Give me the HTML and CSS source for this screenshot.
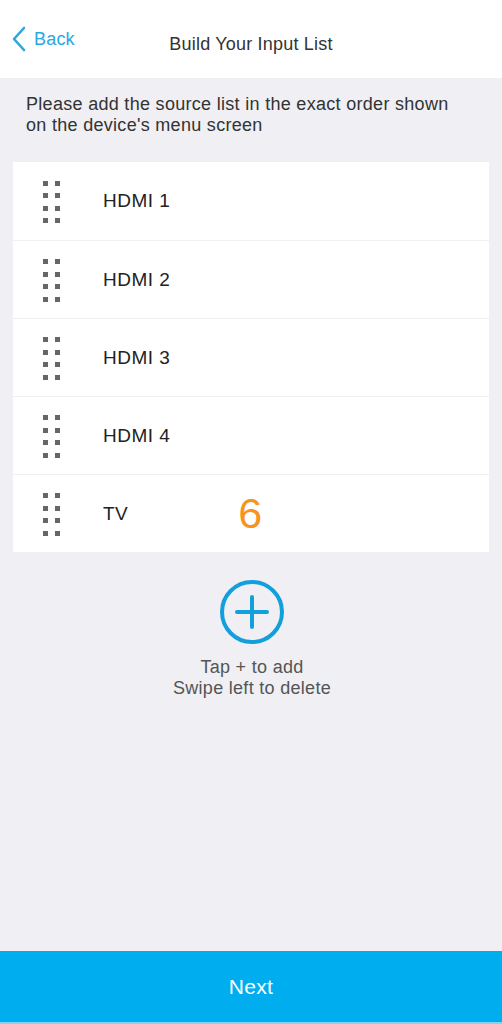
FILE: index.html
```html
<!DOCTYPE html>
<html lang="en">
<head>
    <meta charset="UTF-8">
    <meta name="viewport" content="width=device-width, initial-scale=1.0">
    <title>Build Your Input List</title>
    <link rel="stylesheet" href="styles.css">
</head>
<body>

    <div class="app">
        <header class="topbar">
            <a class="back" href="#">
                <svg class="chevron" width="14" height="26" viewBox="0 0 14 26">
                    <path d="M12 2 L2 13 L12 24" fill="none" stroke="#29a8e0" stroke-width="2.6" stroke-linecap="round" stroke-linejoin="round"/>
                </svg>
                Back
            </a>
            <h1 class="title">Build Your Input List</h1>
        </header>

        <p class="intro">Please add the source list in the exact order shown on the device's menu screen</p>

        <ul class="source-list">
            <li class="source"><span class="grip"><i></i><i></i><i></i><i></i><i></i><i></i><i></i><i></i></span><span class="name">HDMI 1</span></li>
            <li class="source"><span class="grip"><i></i><i></i><i></i><i></i><i></i><i></i><i></i><i></i></span><span class="name">HDMI 2</span></li>
            <li class="source"><span class="grip"><i></i><i></i><i></i><i></i><i></i><i></i><i></i><i></i></span><span class="name">HDMI 3</span></li>
            <li class="source"><span class="grip"><i></i><i></i><i></i><i></i><i></i><i></i><i></i><i></i></span><span class="name">HDMI 4</span></li>
            <li class="source"><span class="grip"><i></i><i></i><i></i><i></i><i></i><i></i><i></i><i></i></span><span class="name">TV</span><span class="channel">6</span></li>
        </ul>

        <div class="add-area">
            <button class="add-btn" type="button">
                <svg width="66" height="66" viewBox="0 0 66 66">
                    <circle cx="33" cy="33" r="30" fill="none" stroke="#139fdb" stroke-width="4"/>
                    <path d="M33 18 V48 M18 33 H48" stroke="#139fdb" stroke-width="4" stroke-linecap="round"/>
                </svg>
            </button>
            <p class="hint">Tap + to add<br>Swipe left to delete</p>
        </div>

        <button class="next" type="button">Next</button>
    </div>

</body>
</html>
```

FILE: styles.css
```css
body {
    font-family: "Liberation Sans", Arial, sans-serif;
    margin: 0;
    background-color: #efeff4;
}

.app {
    display: flex;
    flex-direction: column;
    height: 1024px;
}

.topbar {
    height: 78px;
    background-color: #fff;
    display: flex;
    align-items: center;
    position: relative;
}

.back {
    display: flex;
    align-items: center;
    gap: 8px;
    margin-left: 12px;
    margin-top: 0;
    color: #29a8e0;
    font-size: 18px;
    letter-spacing: 0.2px;
    text-decoration: none;
    position: relative;
    z-index: 1;
}

.title {
    position: absolute;
    left: 0;
    right: 0;
    top: 34px;
    margin: 0;
    text-align: center;
    font-size: 18px;
    letter-spacing: 0.2px;
    font-weight: normal;
    color: #333;
}

.intro {
    margin: 16px 44px 0 26px;
    font-size: 18px;
    letter-spacing: 0.3px;
    line-height: 21px;
    color: #333;
}

.source-list {
    list-style: none;
    margin: 26px 13px 0 13px;
    padding: 0;
    background-color: #fff;
}

.source {
    height: 78px;
    display: flex;
    align-items: center;
    border-top: 1px solid #efeff0;
    box-sizing: border-box;
}

.source:first-child {
    border-top: none;
}

.grip {
    display: grid;
    grid-template-columns: 5px 5px;
    column-gap: 7px;
    row-gap: 7.5px;
    margin-left: 30px;
    margin-top: 2px;
}

.grip i {
    width: 5px;
    height: 5px;
    background-color: #666;
}

.name {
    margin-left: 43px;
    font-size: 19px;
    letter-spacing: 0.5px;
    color: #222;
}

.channel {
    margin-left: 110px;
    font-size: 43px;
    color: #f7941d;
    line-height: 1;
}

.add-area {
    display: flex;
    flex-direction: column;
    align-items: center;
    margin-top: 27px;
    margin-left: 2px;
}

.add-btn {
    background: none;
    border: none;
    padding: 0;
    width: 66px;
    height: 66px;
    cursor: pointer;
}

.hint {
    margin: 12px 0 0 0;
    text-align: center;
    font-size: 18px;
    letter-spacing: 0.3px;
    line-height: 21px;
    color: #555;
}

.next {
    margin-top: auto;
    height: 71px;
    padding: 0;
    border: none;
    border-bottom: 2px solid #7fd3f5;
    background-color: #00adee;
    color: #fff;
    font-family: "Liberation Sans", Arial, sans-serif;
    font-size: 21px;
    letter-spacing: 0.3px;
    cursor: pointer;
    box-sizing: content-box;
}
```
